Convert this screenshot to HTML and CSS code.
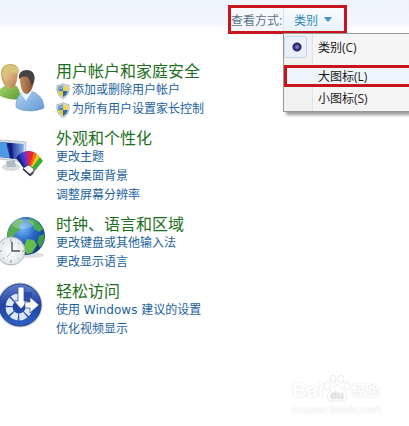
FILE: index.html
```html
<!DOCTYPE html>
<html lang="zh-CN">
<head>
    <meta charset="UTF-8">
    <meta name="viewport" content="width=device-width, initial-scale=1.0">
    <title>控制面板</title>
    <link rel="stylesheet" href="styles.css">
</head>
<body>
    <!-- shared shapes -->
    <svg class="defs" width="0" height="0" aria-hidden="true">
        <defs>
            <symbol id="shield" viewBox="0 0 14 16">
                <path d="M7 .5C5 2 3 2.400 1 2.400 .4 8 1.500 13 7 15.500 12.500 13 13.600 8 13 2.400 11 2.400 9 2 7 .5z" fill="#dfe6e4" stroke="#8fa3a6" stroke-width=".8"/>
                <path d="M7 2C5.500 3 4 3.500 2.300 3.600V8H7z" fill="#3d7fc0"/>
                <path d="M7 2c1.500 1 3 1.500 4.700 1.600V8H7z" fill="#efd34e"/>
                <path d="M2.300 8H7v6C4 12.500 2.600 10.500 2.300 8z" fill="#e6c63c"/>
                <path d="M11.700 8H7v6c3-1.500 4.400-3.500 4.700-6z" fill="#2c68ab"/>
                <path d="M3 4.200C5 4 6 3.500 7 2.800v3C5.500 6.200 4 6.500 3 7z" fill="#a5cdec" opacity=".6"/>
            </symbol>
        </defs>
    </svg>

    <header class="toolbar">
        <div class="view-by">
            <span class="view-label" id="view-label">查看方式:</span>
            <button class="view-btn" id="view-btn" type="button" aria-labelledby="view-label view-btn" aria-expanded="true">类别 <span class="arrow"></span></button>
        </div>
        <div class="view-menu">
            <label class="menu-item first"><input type="radio" name="view" checked><span>类别(C)</span></label>
            <label class="menu-item marked"><input type="radio" name="view"><span>大图标(L)</span></label>
            <label class="menu-item"><input type="radio" name="view"><span>小图标(S)</span></label>
        </div>
    </header>

    <main class="categories">
        <section class="category">
            <svg class="icon" viewBox="0 0 48 52" aria-hidden="true">
                <defs>
                    <linearGradient id="green" x2="1" y2="1"><stop stop-color="#a9d56c"/><stop offset="1" stop-color="#5c9c35"/></linearGradient>
                    <linearGradient id="blue" x2="1" y2="1"><stop stop-color="#b5d6f2"/><stop offset="1" stop-color="#5f97d3"/></linearGradient>
                    <linearGradient id="skin" x2="1" y2="1"><stop stop-color="#f0c796"/><stop offset="1" stop-color="#b77a4c"/></linearGradient>
                    <linearGradient id="tan" x2="1"><stop stop-color="#c48d5d"/><stop offset="1" stop-color="#80502f"/></linearGradient>
                </defs>
                <path d="M0 27c4-3 8-5 12-5 5 1 8 5 8 11v4c-6 1-14 0-20-3z" fill="url(#green)"/>
                <path d="M2 18C-1 8 3 2 10 2c6 0 10 3 8 9l-2 9c-1 5-4 8-7 7-3 0-5-4-7-9z" fill="#c5ad62"/>
                <path d="M7 10c5-1 9-1 10-1 1 6 0 13-4 17-4 1-7-4-8-9z" fill="url(#skin)"/>
                <path d="M2 12C3 5 7 2 11 3c6 0 9 4 8 8-5 0-9-1-11 0-2 2-1 7-3 9z" fill="#d8c27c"/>
                <path d="M16 45c0-9 3-14 10-16 8-1 18 5 18 17-8 4-23 4-28-1z" fill="url(#blue)" stroke="#6492c2" stroke-width=".6"/>
                <path d="M21 32l5 7 6-10-7-2z" fill="#e9f3fb"/>
                <path d="M20 17c-1-6 2-9 7-8 6 0 8 4 7 10-1 7-4 13-8 13-4-1-6-8-6-15z" fill="url(#tan)"/>
                <path d="M19 17c-1-6 3-9 8-9 6 0 9 5 7 12l-3 4c0-5-2-7-3-9-3-1-6-1-9 2z" fill="#464246"/>
            </svg>
            <div class="content">
                <h2><a href="#">用户帐户和家庭安全</a></h2>
                <ul>
                    <li><svg class="shield" aria-hidden="true"><use href="#shield"/></svg><a href="#">添加或删除用户帐户</a></li>
                    <li><svg class="shield" aria-hidden="true"><use href="#shield"/></svg><a href="#">为所有用户设置家长控制</a></li>
                </ul>
            </div>
        </section>

        <section class="category">
            <svg class="icon" viewBox="0 0 48 52" aria-hidden="true">
                <defs>
                    <linearGradient id="screen" x2="1"><stop stop-color="#1c3fa5"/><stop offset=".5" stop-color="#2438a0"/><stop offset="1" stop-color="#8bb6ea"/></linearGradient>
                </defs>
                <ellipse cx="11" cy="38" rx="9" ry="4" fill="#d7dce1"/>
                <path d="M6 32h9l1 6H7z" fill="#b2bac2"/>
                <path d="M0 11l26 2-1 20L0 30z" fill="#dfe5eb" stroke="#9aa5b1" stroke-width=".6"/>
                <path d="M0 13l24 2-1 16L0 28z" fill="url(#screen)"/>
                <path d="M0 13l6 1 4 15-10-1z" fill="#4e9be5"/>
                <path d="M8 14l4 0 1 16-3-1z" fill="#101e78"/>
                <path d="M25 41l-9-12 3-4 10 15z" fill="#1a2384"/>
                <path d="M26 40l-7-15 4-2 6 17z" fill="#2a3fca"/>
                <path d="M27 40l-4-17 4-1 3 18z" fill="#8a2bb0"/>
                <path d="M28 40l-1-18h3l1 18z" fill="#cb2078"/>
                <path d="M28 40l2-18 4 1-2 17z" fill="#e82b28"/>
                <path d="M29 40l5-17 3 2-4 16z" fill="#f06a1c"/>
                <path d="M30 40l7-15 3 3-6 14z" fill="#f2c51d"/>
                <path d="M31 40l9-12 3 4-9 11z" fill="#37ad34"/>
                <path d="M23 39l6-3 5 4-1 5-3 2z" fill="#f7f7fa" stroke="#55566e" stroke-width=".8"/>
                <path d="M23 40l7 6 3-3" fill="none" stroke="#222238" stroke-width="1.300"/>
            </svg>
            <div class="content">
                <h2><a href="#">外观和个性化</a></h2>
                <ul>
                    <li><a href="#">更改主题</a></li>
                    <li><a href="#">更改桌面背景</a></li>
                    <li><a href="#">调整屏幕分辨率</a></li>
                </ul>
            </div>
        </section>

        <section class="category">
            <svg class="icon" viewBox="0 0 48 52" aria-hidden="true">
                <defs>
                    <radialGradient id="ocean" cx=".4" cy=".3" r=".7"><stop stop-color="#72b8f4"/><stop offset=".5" stop-color="#2867c8"/><stop offset="1" stop-color="#12358a"/></radialGradient>
                    <radialGradient id="face"><stop stop-color="#fff"/><stop offset="1" stop-color="#dfe6e8"/></radialGradient>
                </defs>
                <ellipse cx="30" cy="40" rx="14" ry="3" fill="#c8ccd0" opacity=".6"/>
                <circle cx="26" cy="21" r="19" fill="url(#ocean)"/>
                <path d="M9 14c2-5 7-9 12-11l2 4-4 4 1 4-5 3-2 6-5 0c-1-3-1-6 1-10z" fill="#58ad50"/>
                <path d="M29 3c6 1 11 5 14 11l-4 3-5-3-1-4-5-3z" fill="#48ad4c"/>
                <path d="M27 24l7 1 3 5-5 8-6 1-2-8z" fill="#65bc4b"/>
                <path d="M39 21l5-2c1 6-1 10-4 14l-3-6z" fill="#3c9b48"/>
                <ellipse cx="23" cy="9" rx="11" ry="5" fill="#fff" opacity=".25"/>
                <circle cx="11" cy="36" r="14" fill="url(#face)" stroke="#a9b3b7" stroke-width="1"/>
                <path d="M11 24v3M11 45v3M22 36h2M0 36h2M19 28l-1 1M4 29l-1-1M19 44l-1-1M4 43l-1 1" stroke="#8c9599" stroke-width="1"/>
                <path d="M12 27v9h8" fill="none" stroke="#465158" stroke-width="1.400"/>
                <path d="M12 36l-5 6" stroke="#c8a7a1" stroke-width=".7"/>
            </svg>
            <div class="content">
                <h2><a href="#">时钟、语言和区域</a></h2>
                <ul>
                    <li><a href="#">更改键盘或其他输入法</a></li>
                    <li><a href="#">更改显示语言</a></li>
                </ul>
            </div>
        </section>

        <section class="category">
            <svg class="icon" viewBox="0 2 48 52" aria-hidden="true">
                <defs>
                    <linearGradient id="disc" x2="0" y2="1"><stop stop-color="#5f7fcc"/><stop offset=".5" stop-color="#2141a0"/><stop offset="1" stop-color="#2c62c6"/></linearGradient>
                </defs>
                <circle cx="20" cy="25" r="22.500" fill="#c9ced7"/>
                <circle cx="20" cy="25" r="21" fill="url(#disc)" stroke="#2a4287" stroke-width="1"/>
                <circle cx="19" cy="27" r="10" fill="none" stroke="#dfe8f8" stroke-width="7" stroke-dasharray="6.500 1.350" stroke-dashoffset="-1"/>
                <path d="M19 26V12h13v14z" fill="#2c4cab"/>
                <path d="M18 7h6v14h4l-7 8-7-8h4z" fill="#fff" stroke="#3553a5" stroke-width=".8"/>
                <path d="M25 22h5v-5l9 8-9 8v-5h-5z" fill="#fff" stroke="#3553a5" stroke-width=".8"/>
            </svg>
            <div class="content">
                <h2><a href="#">轻松访问</a></h2>
                <ul>
                    <li><a href="#">使用 Windows 建议的设置</a></li>
                    <li><a href="#">优化视频显示</a></li>
                </ul>
            </div>
        </section>
    </main>

    <div class="watermark">
        <div class="brand">
            <span>Bai</span>
            <svg class="paw" viewBox="0 0 28 28" aria-hidden="true">
                <ellipse cx="10" cy="5" rx="3" ry="4"/>
                <ellipse cx="18" cy="5" rx="3" ry="4"/>
                <ellipse cx="4" cy="12" rx="3" ry="4"/>
                <ellipse cx="24" cy="12" rx="3" ry="4"/>
                <path d="M14 11c-3 0-5 4-8 7s-2 9 2 9h12c4 0 5-6 2-9s-5-7-8-7z"/>
                <text x="14" y="25" text-anchor="middle">du</text>
            </svg>
            <span class="brand-cn">经验</span>
        </div>
        <div class="site">jingyan.baidu.com</div>
    </div>
</body>
</html>
```

FILE: styles.css
```css
* {
    margin: 0;
    padding: 0;
    box-sizing: border-box;
}

body {
    min-height: 100vh;
    background: #fff linear-gradient(#edf3f8, #f5f6fd 24px, #fff 30px) no-repeat;
    font-family: "Open Sans", "Noto Sans CJK SC", sans-serif;
    font-size: 12px;
    overflow-x: hidden;
}

a {
    color: #1b62a0;
    text-decoration: none;
}

a:hover {
    text-decoration: underline;
}

.defs {
    position: absolute;
}

/* top bar */
.toolbar {
    position: relative;
    display: flex;
    justify-content: flex-end;
    padding: 5px 62px 0 0;
}

.view-by {
    display: flex;
    align-items: center;
    height: 29px;
    border: 3px solid #c8141c;
    background: #f5f9fc;
}

.view-label {
    width: 52px;
    color: #5d7188;
    white-space: nowrap;
}

.view-btn {
    display: flex;
    align-items: center;
    gap: 6px;
    align-self: stretch;
    width: 61px;
    padding-left: 10px;
    border: none;
    border-left: 1px solid #d5e3ee;
    background: linear-gradient(#f8fbfd, #e9f3fa);
    color: #2f86bd;
    font: inherit;
    cursor: pointer;
}

.arrow {
    border: 4px solid transparent;
    border-top: 5px solid #3d8fc4;
    border-bottom: none;
}

.view-menu {
    position: absolute;
    top: 33px;
    right: -4px;
    width: 130px;
    padding: 2px 0;
    border: 1px solid #979797;
    background: linear-gradient(90deg, #f1f1f1 28px, #e2e3e3 28px, #e2e3e3 29px, #f5f5f5 29px);
    box-shadow: 3px 3px 3px rgba(0, 0, 0, 0.4);
}

.menu-item {
    display: flex;
    align-items: center;
    gap: 11px;
    height: 22px;
    color: #1a1a1a;
    cursor: pointer;
}

.menu-item.first {
    margin-bottom: 7px;
}

.menu-item.marked {
    border: 3px solid #c8141c;
    background: #edf4fb;
}

.menu-item.marked input {
    margin-left: -3px;
}

.menu-item input {
    appearance: none;
    width: 23px;
    height: 22px;
}

.menu-item input:checked {
    border: 1px solid #c3d5ec;
    border-radius: 2px;
    background: radial-gradient(circle at 12px 10px, #8f96d6 0, #2b2c78 3px, #26245f 4px, #eaf0f9 5px);
}

/* category list */
.categories {
    display: flex;
    flex-direction: column;
    gap: 10px;
    padding: 28px 0 20px;
}

.category {
    display: flex;
    align-items: flex-start;
    gap: 8px;
}

.icon {
    flex: none;
    width: 48px;
    height: 52px;
}

h2 {
    font-size: 16px;
    font-weight: 400;
    line-height: 19px;
}

h2 a {
    color: #1e7020;
}

ul {
    list-style: none;
    font-family: "DejaVu Sans", "Noto Sans CJK SC", sans-serif;
}

li {
    display: flex;
    align-items: center;
    gap: 2px;
    height: 19px;
    line-height: 19px;
}

.shield {
    width: 14px;
    height: 16px;
}

/* corner mark */
.watermark {
    position: absolute;
    right: 28px;
    bottom: 10px;
    color: #fff;
    text-shadow: 0 0 2px #d6d6d6;
}

.brand {
    display: flex;
    align-items: flex-end;
    font: bold 20px/24px "Liberation Sans", "Noto Sans CJK SC", sans-serif;
}

.paw {
    width: 28px;
    height: 28px;
    fill: #fff;
    stroke: #ebebeb;
}

.paw text {
    fill: #e2e2e2;
    stroke: none;
    font-size: 11px;
}

.brand-cn {
    font-size: 14px;
}

.site {
    font: 11px/14px "Liberation Sans", sans-serif;
}
```
